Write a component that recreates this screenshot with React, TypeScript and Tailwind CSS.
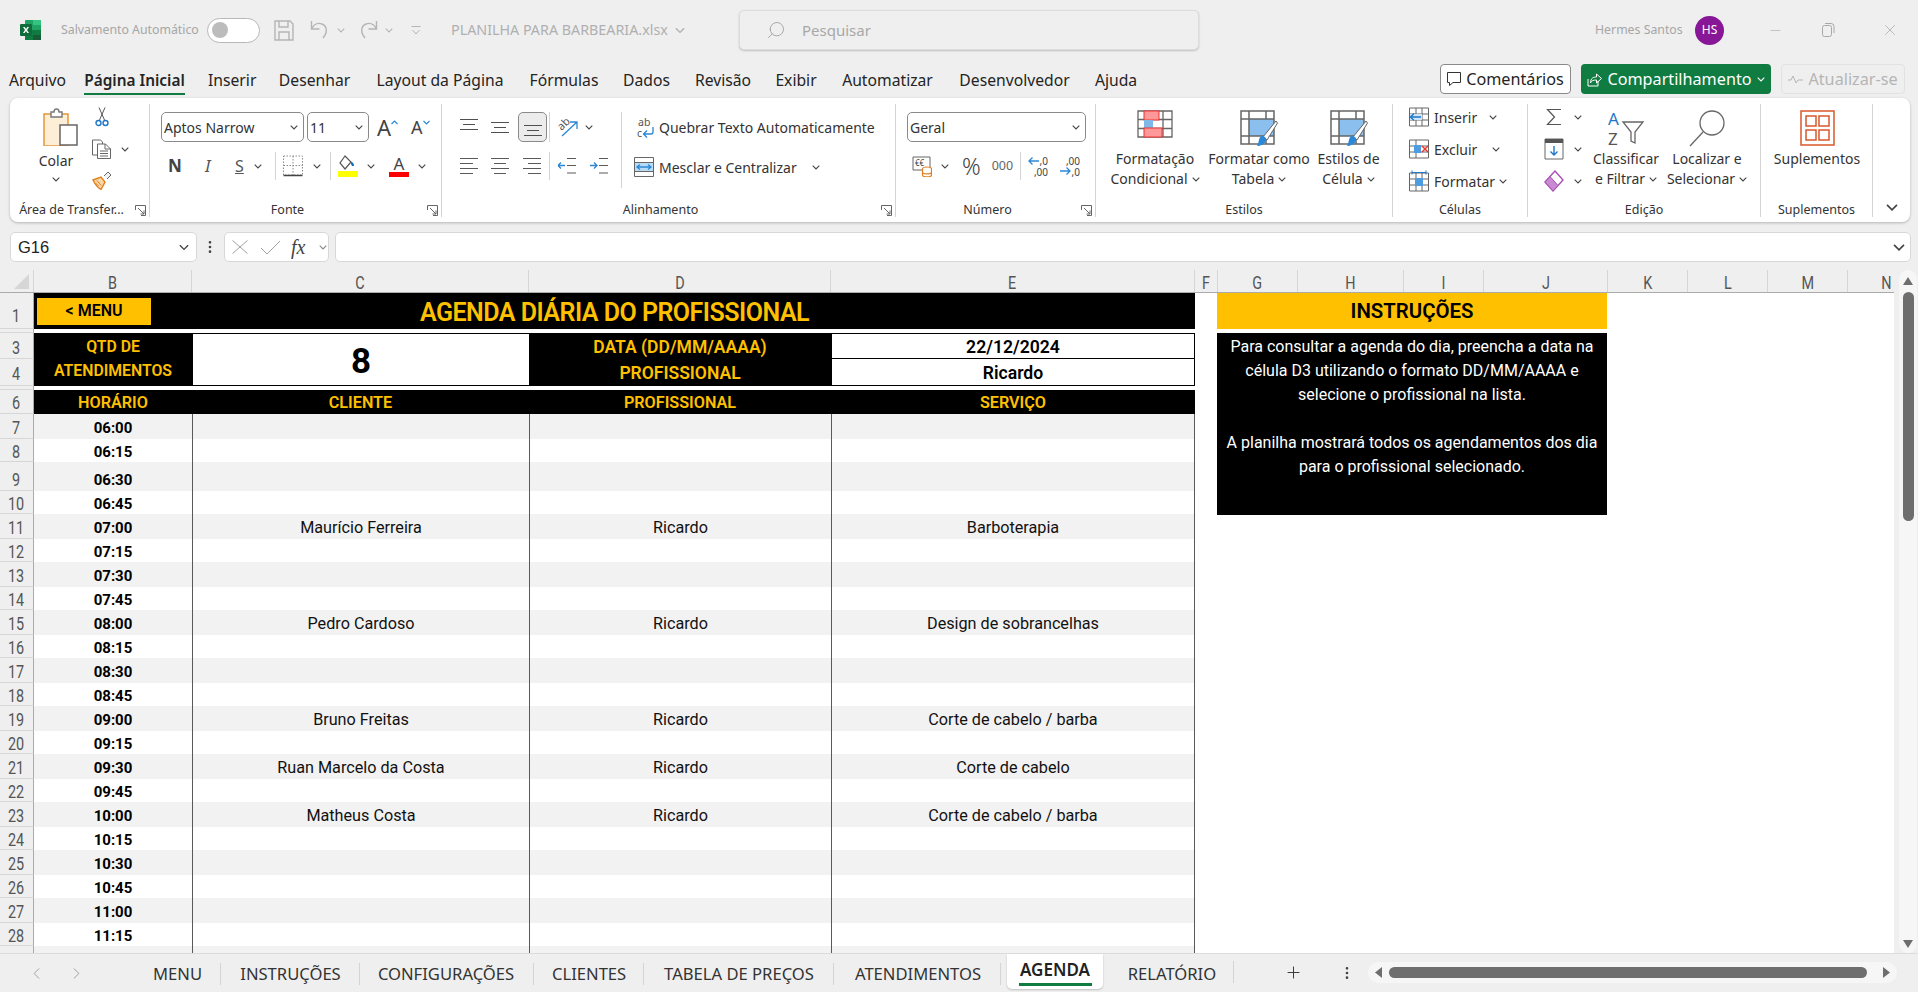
import { ReactNode } from "react";
import { ChevronLeft, ChevronRight, EllipsisVertical, Minus, Plus, Search, X } from "lucide-react";

const BLUE = "#2b88d8";

function Chev({ className = "", color = "#444" }: { className?: string; color?: string }) {
  return (
    <svg width="8" height="5" viewBox="0 0 8 5" className={`shrink-0 ${className}`}>
      <path d="M.7.7 4 4 7.3.7" fill="none" stroke={color} strokeWidth="1.1" />
    </svg>
  );
}

function Launcher() {
  return (
    <svg width="11" height="11" viewBox="0 0 11 11">
      <path d="M.5 5V.5H10.5V10.5H6M3 3l6 6M9 5.500V9H5.500" fill="none" stroke="#666" />
    </svg>
  );
}

function VSep({ className = "" }: { className?: string }) {
  return <div className={`w-px bg-[#d4d4d4] shrink-0 ${className}`} />;
}

// --- title bar icons
function ExcelLogo() {
  return (
    <svg width="21" height="20" viewBox="0 0 21 20" className="ml-[20px]">
      <rect x="5" y="0" width="16" height="20" rx="1" fill="#21a366" />
      <rect x="13" y="0" width="8" height="5" fill="#33c481" />
      <rect x="13" y="5" width="8" height="5" fill="#21a366" />
      <rect x="5" y="10" width="8" height="10" fill="#107c41" />
      <rect x="13" y="10" width="8" height="5" fill="#107c41" />
      <rect x="13" y="15" width="8" height="5" fill="#185c37" />
      <rect x="0" y="4" width="12" height="12" rx="1" fill="#0f6d3b" />
      <path d="M3 7h1.700L6 9l1.300-2H9L7 10l2 3H7.300L6 11l-1.300 2H3l2-3z" fill="#fff" />
    </svg>
  );
}

function SaveIcon() {
  return (
    <svg width="20" height="21" viewBox="0 0 20 21" className="ml-[14px]">
      <path d="M1 1h15l3 3v16H1zM5 1v6h9V1M5 20v-8h10v8" fill="none" stroke="#b5b5b5" strokeWidth="1.400" />
    </svg>
  );
}

function UndoIcon({ flip = false }: { flip?: boolean }) {
  return (
    <svg width="20" height="20" viewBox="0 0 20 20" className={flip ? "-scale-x-100" : ""}>
      <path d="M1.500 1v8h8M1.500 9C4 4 8 2.500 12 4c5 2 6 8 1 14" fill="none" stroke="#b5b5b5" strokeWidth="1.400" />
    </svg>
  );
}

function TitleBar() {
  return (
    <div className="h-[60px] flex items-center shrink-0">
      <ExcelLogo />
      <span className="ml-[20px] text-[12.300px] text-[#a6a6a6] w-[146px] whitespace-nowrap">Salvamento Automático</span>
      <div className="w-[53px] h-[25px] rounded-full border border-[#b8b8b8] bg-white flex items-center pl-[4px]">
        <div className="w-[16px] h-[16px] rounded-full bg-[#bcbcbc]" />
      </div>
      <SaveIcon />
      <div className="ml-[16px]"><UndoIcon /></div>
      <Chev className="ml-[7px]" color="#b5b5b5" />
      <div className="ml-[13px]"><UndoIcon flip /></div>
      <Chev className="ml-[7px]" color="#b5b5b5" />
      <svg width="10" height="9" viewBox="0 0 10 9" className="ml-[18px]">
        <path d="M.5.500h9M1.500 4 5 8l3.500-4" fill="none" stroke="#b5b5b5" />
      </svg>
      <span className="ml-[30px] text-[14.300px] text-[#b0b0b0] w-[219px] whitespace-nowrap">PLANILHA PARA BARBEARIA.xlsx</span>
      <Chev className="ml-[6px] scale-125" color="#b0b0b0" />
      <div className="ml-[55px] w-[460px] h-[40px] rounded-[5px] bg-[#efefef] border border-[#dcdcdc] shadow-[0_1px_2px_rgba(0,0,0,0.2)] flex items-center pl-[26px]">
        <Search size={20} strokeWidth={1.2} color="#a8a8a8" className="-scale-x-100" />
        <span className="ml-[16px] text-[15px] text-[#a8a8a8]">Pesquisar</span>
      </div>
      <span className="ml-[396px] w-[100px] text-[12.300px] text-[#a6a6a6] whitespace-nowrap">Hermes Santos</span>
      <div className="w-[29px] h-[29px] rounded-full bg-[#881798] text-white text-[12px] flex items-center justify-center">HS</div>
      <Minus size={15} strokeWidth={1} color="#a8a8a8" className="ml-[44px]" />
      <svg width="13" height="14" viewBox="0 0 13 14" className="ml-[39px]">
        <path d="M.5 4.500a2 2 0 0 1 2-2h5a2 2 0 0 1 2 2v7a2 2 0 0 1-2 2h-5a2 2 0 0 1-2-2zM3 .500h6a3 3 0 0 1 3 3V10" fill="none" stroke="#a8a8a8" />
      </svg>
      <X size={18} strokeWidth={1} color="#a8a8a8" className="ml-[46px]" />
    </div>
  );
}

const menuItems = [
  { t: "Arquivo", w: "w-[52px]" },
  { t: "Página Inicial", w: "w-[101px]", active: true },
  { t: "Inserir", w: "w-[47px]" },
  { t: "Desenhar", w: "w-[73px]" },
  { t: "Layout da Página", w: "w-[132px]" },
  { t: "Fórmulas", w: "w-[70px]" },
  { t: "Dados", w: "w-[49px]" },
  { t: "Revisão", w: "w-[58px]" },
  { t: "Exibir", w: "w-[42px]" },
  { t: "Automatizar", w: "w-[95px]" },
  { t: "Desenvolvedor", w: "w-[113px]" },
  { t: "Ajuda", w: "w-[44px]" },
];

function MenuBar() {
  return (
    <div className="h-[38px] flex items-start shrink-0 pl-[9px]">
      <div className="flex gap-[23px] text-[15.700px] text-[#242424] pt-[9px]">
        {menuItems.map((m) => (
          <div key={m.t} className={`${m.w} whitespace-nowrap text-center ${m.active ? "font-semibold text-[15.400px] relative" : ""}`}>
            {m.t}
            {m.active && <div className="absolute left-0 right-0 top-[24px] h-[2px] bg-[#107c41]" />}
          </div>
        ))}
      </div>
      <div className="ml-auto flex mt-[4px] mr-[13px] text-[16.200px] gap-[10px]">
        <div className="w-[131px] h-[30px] rounded-[4px] border border-[#8a8a8a] bg-white flex items-center justify-center gap-[5px] text-[#242424]">
          <svg width="14" height="14" viewBox="0 0 14 14"><path d="M.5.500h13v10H6l-3.500 3v-3h-2z" fill="none" stroke="#333" /></svg>
          Comentários
        </div>
        <div className="w-[190px] h-[30px] rounded-[4px] bg-[#107c41] text-white flex items-center justify-center gap-[5px]">
          <svg width="15" height="15" viewBox="0 0 15 15"><path d="M1 7v7h10V9M3.500 11c0-5 3-6 6-6V2l5 4.500-5 4.500V8c-3 0-5 .5-6 3z" fill="none" stroke="#fff" /></svg>
          Compartilhamento
          <Chev color="#fff" />
        </div>
        <div className="w-[124px] h-[30px] rounded-[4px] border border-[#e2e2e2] text-[#b5b5b5] flex items-center justify-center gap-[5px]">
          <svg width="15" height="9" viewBox="0 0 15 9"><path d="M0 5h3l2-4 3 7 2-3h5" fill="none" stroke="#b5b5b5" /></svg>
          Atualizar-se
        </div>
      </div>
    </div>
  );
}

// --- ribbon icons
function PasteIcon() {
  return (
    <svg width="35" height="38" viewBox="0 0 35 38" className="ml-[33px]">
      <path d="M1 6h24v32H1z" fill="#fdeed7" stroke="#e8963a" strokeWidth="1.500" />
      <path d="M8 4h3c0-4 5-4 5 0h3v5H8z" fill="#fff" stroke="#777" strokeWidth="1.400" />
      <path d="M17 17h17v20H17z" fill="#fff" stroke="#666" strokeWidth="1.500" />
    </svg>
  );
}
function Scissors() {
  return (
    <svg width="14" height="20" viewBox="0 0 14 20">
      <path d="M4 .500 9.500 13M10 .500 4.500 13" fill="none" stroke="#555" />
      <circle cx="3.500" cy="16" r="2.500" fill="none" stroke="#1f77c9" strokeWidth="1.400" />
      <circle cx="10.500" cy="16" r="2.500" fill="none" stroke="#1f77c9" strokeWidth="1.400" />
    </svg>
  );
}
function CopyIcon() {
  return (
    <svg width="20" height="20" viewBox="0 0 20 20">
      <path d="M5.500 16H.500V1h8l2 2v2" fill="none" stroke="#666" />
      <path d="M5.500 5h8l5 5v9.500h-13z M13 5v5h5.500 M8 12h8M8 14.500h8M8 17h8" fill="#fff" stroke="#666" />
    </svg>
  );
}
function BrushIcon() {
  return (
    <svg width="20" height="19" viewBox="0 0 20 19">
      <path d="M12 5l4-4 3 3-4 4" fill="#f2f2f2" stroke="#666" />
      <path d="M1 9l8-3 4 5-4 7.500C6 17 3 13 1 9z" fill="#fbd7a8" stroke="#e07f1d" strokeWidth="1.400" />
      <path d="M5 9.500l4 5M3.500 12l3 3" stroke="#e07f1d" />
    </svg>
  );
}
function AlignV({ pos }: { pos: "top" | "mid" | "bot" }) {
  const y = pos === "top" ? [2, 7, 12] : pos === "mid" ? [5, 10, 15] : [8, 13, 18];
  return (
    <svg width="20" height="20" viewBox="0 0 20 20">
      <path d={`M1 ${y[0]}.5h18M4 ${y[1]}.5h12M1 ${y[2]}.5h18`} stroke="#505050" strokeWidth="1.100" />
    </svg>
  );
}
function AlignH({ pos }: { pos: "l" | "c" | "r" }) {
  const d =
    pos === "l"
      ? "M1 3.500h18M1 8.500h13M1 13.500h18M1 18.500h13"
      : pos === "c"
        ? "M1 3.500h18M4 8.500h12M1 13.500h18M4 18.500h12"
        : "M1 3.500h18M6 8.500h13M1 13.500h18M6 18.500h13";
  return <svg width="20" height="22" viewBox="0 0 20 22"><path d={d} stroke="#5a5a5a" strokeWidth="1.100" /></svg>;
}
function Indent({ right = false }: { right?: boolean }) {
  return (
    <svg width="18" height="20" viewBox="0 0 18 20">
      <path d="M9 2.500h9M9 9.500h9M9 17h9" stroke="#5a5a5a" />
      <path d={right ? "M0 9.500h7M4 6.500l3 3-3 3" : "M7 9.500H0M3 6.500l-3 3 3 3"} fill="none" stroke={BLUE} strokeWidth="1.300" />
    </svg>
  );
}
function Orientation() {
  return (
    <svg width="21" height="22" viewBox="0 0 21 22" className="overflow-visible">
      <text x="0" y="12" fontSize="11" fill="#555" transform="rotate(-45 6 8)" fontFamily="Noto Sans">ab</text>
      <path d="M5 20 20 6M13 6h7v7" fill="none" stroke={BLUE} strokeWidth="1.300" />
    </svg>
  );
}
function WrapIcon() {
  return (
    <svg width="19" height="23" viewBox="0 0 19 23" className="overflow-visible">
      <text x="2" y="10" fontSize="10.500" fill="#555" fontFamily="Noto Sans">ab</text>
      <text x="1" y="21" fontSize="10.500" fill="#555" fontFamily="Noto Sans">c</text>
      <path d="M17 11v5a2 2 0 0 1-2 2H8M11 14.500 7.500 18l3.500 3.500" fill="none" stroke={BLUE} strokeWidth="1.300" />
    </svg>
  );
}
function MergeIcon() {
  return (
    <svg width="20" height="20" viewBox="0 0 20 20">
      <path d="M.5.500h19v19H.5zM.5 5.500h19M.5 14.500h19" fill="none" stroke="#666" />
      <rect x="1" y="6" width="18" height="8" fill="#b9dcf6" />
      <path d="M3 10h14M6 7.500 3 10l3 2.500M14 7.500l3 2.500-3 2.500" fill="none" stroke={BLUE} strokeWidth="1.300" />
    </svg>
  );
}
function BordersIcon() {
  return (
    <svg width="20" height="22" viewBox="0 0 20 22">
      <path d="M.5 1h19v19H.5zM10 1v19M.5 10.500h19" fill="none" stroke="#8a8a8a" strokeDasharray="1.500 1.500" />
      <path d="M.5 20.500h19" stroke="#444" strokeWidth="1.500" />
    </svg>
  );
}
function FillIcon() {
  return (
    <svg width="20" height="22" viewBox="0 0 20 22">
      <path d="M7 1 2 8l5 6 6-7z" fill="#fff" stroke="#555" strokeWidth="1.200" />
      <path d="M13 7c2 0 3 2 3 4h-2l-1-2z" fill="#0f6cbd" />
      <rect x="0" y="16" width="20" height="6" fill="#ffff00" />
    </svg>
  );
}
function FontColor() {
  return (
    <div className="flex flex-col items-center w-[20px]">
      <span className="text-[17px] leading-[17px] text-[#444]">A</span>
      <div className="w-[20px] h-[5px] bg-[#ff0000]" />
    </div>
  );
}
function GrowFont({ up }: { up: boolean }) {
  return (
    <div className="w-[20px] flex items-start">
      <span className={up ? "text-[22px] leading-[26px] text-[#444]" : "text-[18px] leading-[26px] text-[#444]"}>A</span>
      <svg width="7" height="5" viewBox="0 0 7 5" className="mt-[6px] shrink-0">
        <path d={up ? "M.5 4 3.500 1l3 3" : "M.5 1l3 3 3-3"} fill="none" stroke={BLUE} strokeWidth="1.200" />
      </svg>
    </div>
  );
}
function TableIcon() {
  return (
    <svg width="38" height="38" viewBox="0 0 38 38">
      <rect x="9" y="9" width="25" height="17" fill="#8bc0ee" />
      <path d="M1 1h33v33H1zM1 9h33M1 26h33M9 1v33M26 1v8M26 26v8" fill="none" stroke="#666" strokeWidth="1.500" />
      <path d="M36 11 23 27l4 3L37.500 13z" fill="#fff" stroke="#666" />
      <path d="M21 26c4 0 6 2 5 5-1 3-6 5-9 5 2-2 1-7 4-10z" fill={BLUE} />
    </svg>
  );
}
function CondFormatIcon() {
  return (
    <svg width="36" height="28" viewBox="0 0 36 28">
      <path d="M1 1h34v26H1zM1 9.500h34M1 18.500h34M8 1v26M26 1v26" fill="none" stroke="#666" strokeWidth="1.300" />
      <rect x="7" y="1" width="15" height="9" fill="#f99" stroke="#e33" />
      <rect x="7" y="10" width="9" height="8" fill="#7fb7e6" />
      <rect x="7" y="18" width="18" height="9" fill="#f99" stroke="#e33" />
    </svg>
  );
}
function InsertCells() {
  return (
    <svg width="20" height="20" viewBox="0 0 20 20">
      <path d="M.5 1h19v18H.5zM.5 7h19M.5 13h19M7 1v18M13 1v18" fill="none" stroke="#666" />
      <rect x="1" y="7" width="12" height="6" fill="#cfe5f8" />
      <path d="M12 10H2M5 6.500 1.500 10 5 13.500" fill="none" stroke="#1f77c9" strokeWidth="1.400" />
    </svg>
  );
}
function DeleteCells() {
  return (
    <svg width="20" height="20" viewBox="0 0 20 20">
      <path d="M.5 1h19v18H.5zM.5 7h19M.5 13h19M7 1v18" fill="none" stroke="#666" />
      <rect x="5" y="6" width="7" height="8" fill="#4d9de0" />
      <path d="M13 7l6 6M19 7l-6 6" stroke="#e83b2f" strokeWidth="1.500" />
    </svg>
  );
}
function FormatCells() {
  return (
    <svg width="20" height="22" viewBox="0 0 20 22">
      <path d="M.5 3h19v18H.5zM.5 9h19M.5 15h19M7 3v18M13 3v18" fill="none" stroke="#666" />
      <rect x="6" y="8" width="8" height="8" fill="#4d9de0" />
      <path d="M3 2.500h14M3 .500v4M17 .500v4" stroke="#1f77c9" />
    </svg>
  );
}
function SigmaIcon() {
  return (
    <svg width="16" height="18" viewBox="0 0 16 18">
      <path d="M15 1.500H1.500L8.500 9l-7 7.500H15" fill="none" stroke="#555" strokeWidth="1.200" />
    </svg>
  );
}
function FillDown() {
  return (
    <svg width="20" height="22" viewBox="0 0 20 22">
      <path d="M1 1h18v20H1z" fill="#fff" stroke="#666" />
      <rect x="1" y="1" width="18" height="4" fill="#555" />
      <path d="M10 8v9M6.500 13.500 10 17l3.500-3.500" fill="none" stroke="#1f77c9" strokeWidth="1.400" />
    </svg>
  );
}
function Eraser() {
  return (
    <svg width="20" height="22" viewBox="0 0 20 22">
      <path d="M11 1 19 10 9 21 1 12z" fill="#fff" stroke="#a94fb5" strokeWidth="1.400" />
      <path d="M6 6.500 14 15.500 9 21 1 12z" fill="#c88ad0" stroke="#a94fb5" />
    </svg>
  );
}
function SortIcon() {
  return (
    <svg width="38" height="36" viewBox="0 0 38 36" className="overflow-visible">
      <text x="1" y="15" fontSize="17" fill="#1f77c9" fontFamily="Noto Sans">A</text>
      <text x="1" y="35" fontSize="17" fill="#555" fontFamily="Noto Sans">Z</text>
      <path d="M16 12h20l-8 10v11l-4-2v-9z" fill="#fff" stroke="#666" strokeWidth="1.300" />
    </svg>
  );
}
function FindIcon() {
  return (
    <svg width="36" height="37" viewBox="0 0 36 37">
      <circle cx="23" cy="13" r="12" fill="#fff" stroke="#666" strokeWidth="1.300" />
      <path d="M14 22 1 36" stroke="#666" strokeWidth="1.300" />
    </svg>
  );
}
function AddinsIcon() {
  return (
    <svg width="35" height="36" viewBox="0 0 35 36">
      <path d="M1 1h33v34H1zM6 6h10v10H6zM19 6h10v10H19zM6 20h10v10H6zM19 20h10v10H19z" fill="none" stroke="#d9572b" strokeWidth="1.500" />
    </svg>
  );
}
function DecimalIcon({ more }: { more: boolean }) {
  return (
    <svg width="20" height="22" viewBox="0 0 20 22" className="overflow-visible">
      <text x="20" y="10" textAnchor="end" fontSize="10" fill="#444" fontFamily="Noto Sans">{more ? ",00" : ",0"}</text>
      <text x="20" y="21" textAnchor="end" fontSize="10" fill="#444" fontFamily="Noto Sans">{more ? ",0" : ",00"}</text>
      <path
        d={more ? "M0 16h10M6.500 12.500 10 16l-3.500 3.500" : "M11 6H1M4.500 2.500 1 6l3.500 3.500"}
        fill="none"
        stroke={BLUE}
        strokeWidth="1.300"
      />
    </svg>
  );
}

function SelectBox({ text, className }: { text: string; className: string }) {
  return (
    <div className={`h-[30px] rounded-[5px] border border-[#8a8a8a] bg-white flex items-center justify-between pl-[2px] pr-[5px] text-[14px] text-[#333] ${className}`}>
      {text}
      <Chev />
    </div>
  );
}

function Group({ label, width, launcher, children }: { label: string; width: string; launcher?: boolean; children: ReactNode }) {
  return (
    <div className={`${width} h-[113px] mt-[6px] border-r border-[#d4d4d4] flex flex-col shrink-0`}>
      <div className="flex-1 flex min-h-0">{children}</div>
      <div className="h-[14px] flex items-center text-[12.500px] leading-[14px] text-[#333]">
        <span className="flex-1 text-center whitespace-nowrap">{label}</span>
        {launcher && <span className="w-[16px] flex justify-end pr-[3px]"><Launcher /></span>}
      </div>
    </div>
  );
}

function BigButton({ width, icon, lines }: { width: string; icon: ReactNode; lines: string[] }) {
  return (
    <div className={`${width} flex flex-col items-center shrink-0`}>
      <div className="h-[45px] pt-[6px] flex justify-center">{icon}</div>
      {lines.map((l, i) => (
        <div key={l} className="h-[20px] leading-[20px] text-[14px] text-[#333] whitespace-nowrap flex items-center gap-[4px]">
          {l}
          {i === 1 && <Chev />}
        </div>
      ))}
    </div>
  );
}

function CellRow({ icon, text, w }: { icon: ReactNode; text: string; w: string }) {
  return (
    <div className="h-[28px] flex items-center pl-[16px] mb-[4px]">
      <div className="w-[20px] flex justify-center">{icon}</div>
      <span className={`ml-[5px] text-[14px] text-[#333] ${w}`}>{text}</span>
      <Chev />
    </div>
  );
}

function Ribbon() {
  return (
    <div className="mx-[10px] w-[1900px] h-[124px] rounded-[8px] bg-white shadow-[0_1px_3px_rgba(0,0,0,0.25)] flex shrink-0">
      <Group label="Área de Transfer..." width="w-[140px]" launcher>
        <div className="w-[78px] flex flex-col items-start">
          <div className="mt-[4px]"><PasteIcon /></div>
          <div className="w-[92px] text-center text-[14px] text-[#333] mt-[4px]">Colar</div>
          <div className="w-[92px] flex justify-center mt-[6px]"><Chev /></div>
        </div>
        <div className="flex flex-col items-start mt-[3px] pl-[4px]">
          <div className="h-[20px] pl-[3px]"><Scissors /></div>
          <div className="h-[20px] mt-[12px] flex items-center gap-[9px]"><CopyIcon /><Chev /></div>
          <div className="h-[19px] mt-[12px]"><BrushIcon /></div>
        </div>
      </Group>

      <Group label="Fonte" width="w-[292px]" launcher>
        <div className="flex flex-col pl-[11px] pt-[8px]">
          <div className="flex items-center">
            <SelectBox text="Aptos Narrow" className="w-[143px]" />
            <SelectBox text="11" className="w-[62px] ml-[3px]" />
            <div className="ml-[8px]"><GrowFont up /></div>
            <div className="ml-[14px]"><GrowFont up={false} /></div>
          </div>
          <div className="flex items-center h-[28px] mt-[10px]">
            <span className="ml-[7px] w-[12px] text-[17px] font-bold text-[#444]">N</span>
            <span className="ml-[25px] w-[10px] text-[17px] italic text-[#555]">I</span>
            <span className="ml-[20px] w-[12px] text-[16px] underline text-[#555]">S</span>
            <Chev className="ml-[7px]" />
            <VSep className="h-[28px] ml-[13px]" />
            <div className="ml-[7px]"><BordersIcon /></div>
            <Chev className="ml-[10px]" />
            <VSep className="h-[28px] ml-[9px]" />
            <div className="ml-[7px]"><FillIcon /></div>
            <Chev className="ml-[9px]" />
            <div className="ml-[14px]"><FontColor /></div>
            <Chev className="ml-[9px]" />
          </div>
        </div>
      </Group>

      <Group label="Alinhamento" width="w-[454px]" launcher>
        <div className="w-[180px] h-[76px] mt-[8px] border-r border-[#d4d4d4] flex flex-col shrink-0">
          <div className="h-[30px] flex items-center pl-[17px]">
            <AlignV pos="top" />
            <div className="ml-[11px]"><AlignV pos="mid" /></div>
            <div className="ml-[8px] w-[29px] h-[30px] rounded-[5px] border border-[#8a8a8a] bg-[#ececec] flex items-center justify-center"><AlignV pos="bot" /></div>
            <VSep className="h-[30px] ml-[2px]" />
            <div className="ml-[7px]"><Orientation /></div>
            <Chev className="ml-[7px]" />
          </div>
          <div className="h-[28px] mt-[10px] flex items-center pl-[17px]">
            <AlignH pos="l" />
            <div className="ml-[11px]"><AlignH pos="c" /></div>
            <div className="ml-[12px]"><AlignH pos="r" /></div>
            <VSep className="h-[28px] ml-[7px]" />
            <div className="ml-[8px]"><Indent /></div>
            <div className="ml-[14px]"><Indent right /></div>
          </div>
        </div>
        <div className="flex flex-col pt-[8px]">
          <div className="h-[30px] flex items-center pl-[14px]">
            <WrapIcon />
            <span className="ml-[4px] text-[14px] text-[#333] whitespace-nowrap">Quebrar Texto Automaticamente</span>
          </div>
          <div className="h-[28px] mt-[11px] flex items-center pl-[12px]">
            <MergeIcon />
            <span className="ml-[5px] text-[14px] text-[#333] w-[153px] whitespace-nowrap">Mesclar e Centralizar</span>
            <Chev />
          </div>
        </div>
      </Group>

      <Group label="Número" width="w-[200px]" launcher>
        <div className="flex flex-col pl-[11px] pt-[8px]">
          <SelectBox text="Geral" className="w-[179px]" />
          <div className="h-[28px] mt-[10px] flex items-center pl-[5px]">
            <svg width="20" height="21" viewBox="0 0 20 21">
              <path d="M1 1h17v13H1z" fill="#fff" stroke="#666" />
              <text x="3" y="10" fontSize="8" fill="#444" fontFamily="Noto Sans">€€</text>
              <ellipse cx="15" cy="13" rx="4.500" ry="2" fill="#fff" stroke="#e07f1d" strokeWidth="1.200" />
              <path d="M10.500 13v6c0 2.500 9 2.500 9 0v-6M10.500 16c0 2.500 9 2.500 9 0" fill="#fff" stroke="#e07f1d" strokeWidth="1.200" />
            </svg>
            <Chev className="ml-[9px]" />
            <span className="ml-[13px] text-[23px] leading-none text-[#444] font-light">%</span>
            <span className="ml-[11px] w-[22px] text-[12.500px] text-[#666]">000</span>
            <VSep className="h-[28px] ml-[6px]" />
            <div className="ml-[7px]"><DecimalIcon more={false} /></div>
            <div className="ml-[12px]"><DecimalIcon more /></div>
          </div>
        </div>
      </Group>

      <Group label="Estilos" width="w-[297px]">
        <BigButton width="w-[118px]" icon={<CondFormatIcon />} lines={["Formatação", "Condicional"]} />
        <BigButton width="w-[90px]" icon={<TableIcon />} lines={["Formatar como", "Tabela"]} />
        <BigButton width="w-[89px]" icon={<TableIcon />} lines={["Estilos de", "Célula"]} />
      </Group>

      <Group label="Células" width="w-[135px]">
        <div className="flex flex-col -mt-[1px]">
          <CellRow icon={<InsertCells />} text="Inserir" w="w-[55px]" />
          <CellRow icon={<DeleteCells />} text="Excluir" w="w-[58px]" />
          <CellRow icon={<FormatCells />} text="Formatar" w="w-[65px]" />
        </div>
      </Group>

      <Group label="Edição" width="w-[233px]">
        <div className="w-[62px] flex flex-col shrink-0 -mt-[1px]">
          <CellRow icon={<SigmaIcon />} text="" w="w-[5px]" />
          <CellRow icon={<FillDown />} text="" w="w-[5px]" />
          <CellRow icon={<Eraser />} text="" w="w-[5px]" />
        </div>
        <BigButton width="w-[72px]" icon={<SortIcon />} lines={["Classificar", "e Filtrar"]} />
        <BigButton width="w-[90px]" icon={<FindIcon />} lines={["Localizar e", "Selecionar"]} />
      </Group>

      <Group label="Suplementos" width="w-[112px]">
        <BigButton width="w-[112px]" icon={<AddinsIcon />} lines={["Suplementos"]} />
      </Group>

      <div className="flex-1 flex items-end justify-center pb-[12px]">
        <Chev className="scale-150" />
      </div>
    </div>
  );
}

function FormulaBar() {
  return (
    <div className="h-[30px] mt-[10px] flex items-center pl-[10px] shrink-0">
      <div className="w-[187px] h-[30px] rounded-[5px] border border-[#d8d8d8] bg-white flex items-center justify-between pl-[7px] pr-[8px] text-[16.500px] text-[#222] font-['Liberation_Sans',sans-serif]">
        G16
        <Chev className="scale-125" />
      </div>
      <EllipsisVertical size={16} color="#444" className="ml-[5px]" />
      <div className="ml-[6px] w-[105px] h-[30px] rounded-[5px] border border-[#d8d8d8] bg-white flex items-center pl-[7px]">
        <svg width="16" height="14" viewBox="0 0 16 14"><path d="M.5.500l15 13M15.500.500l-15 13" stroke="#a0a0a0" /></svg>
        <svg width="21" height="15" viewBox="0 0 21 15" className="ml-[12px]"><path d="M1 8l6 6L20 1" fill="none" stroke="#a0a0a0" /></svg>
        <span className="ml-[10px] w-[18px] text-[20px] italic text-[#444] font-['Liberation_Serif',serif]">fx</span>
        <Chev className="ml-[10px]" color="#888" />
      </div>
      <div className="ml-[6px] w-[1576px] h-[30px] rounded-[5px] border border-[#d8d8d8] bg-white flex items-center justify-end pr-[7px]">
        <Chev className="scale-150" />
      </div>
    </div>
  );
}

const columns = [
  { l: "B", w: "w-[158px]" },
  { l: "C", w: "w-[337px]" },
  { l: "D", w: "w-[302px]" },
  { l: "E", w: "w-[364px]" },
  { l: "F", w: "w-[23px]" },
  { l: "G", w: "w-[80px]" },
  { l: "H", w: "w-[106px]" },
  { l: "I", w: "w-[80px]" },
  { l: "J", w: "w-[124px]" },
  { l: "K", w: "w-[80px]" },
  { l: "L", w: "w-[80px]" },
  { l: "M", w: "w-[80px]" },
];

const headerFont = "font-['Roboto',sans-serif] text-[18px] text-[#555]";

// números e letras de cabeçalho são bem estreitos na referência
function Narrow({ children }: { children: ReactNode }) {
  return <span className="inline-block scale-x-[0.8]">{children}</span>;
}

function ColumnHeaders() {
  return (
    <div className={`h-[23px] flex shrink-0 bg-[#efefef] border-b border-[#ababab] ${headerFont}`}>
      <div className="w-[34px] border-r border-[#d6d6d6] flex items-end justify-end pr-[4px] pb-[3px]">
        <svg width="15" height="15" viewBox="0 0 15 15"><path d="M15 0v15H0z" fill="#d6d6d6" /></svg>
      </div>
      {columns.map((c) => (
        <div key={c.l} className={`${c.w} pt-[2px] border-r border-[#d6d6d6] flex items-center justify-center`}><Narrow>{c.l}</Narrow></div>
      ))}
      <div className="flex-1 pt-[2px] pr-[1px] flex items-center justify-end"><Narrow>N</Narrow></div>
    </div>
  );
}

const timeRows = [
  { n: 7, t: "06:00", h: "h-[25px]" },
  { n: 8, t: "06:15", h: "h-[23px]" },
  { n: 9, t: "06:30", h: "h-[29px]" },
  { n: 10, t: "06:45", h: "h-[23px]" },
  { n: 11, t: "07:00", h: "h-[25px]", c: "Maurício Ferreira", p: "Ricardo", s: "Barboterapia" },
  { n: 12, t: "07:15", h: "h-[23px]" },
  { n: 13, t: "07:30", h: "h-[25px]" },
  { n: 14, t: "07:45", h: "h-[23px]" },
  { n: 15, t: "08:00", h: "h-[25px]", c: "Pedro Cardoso", p: "Ricardo", s: "Design de sobrancelhas" },
  { n: 16, t: "08:15", h: "h-[23px]" },
  { n: 17, t: "08:30", h: "h-[25px]" },
  { n: 18, t: "08:45", h: "h-[23px]" },
  { n: 19, t: "09:00", h: "h-[25px]", c: "Bruno Freitas", p: "Ricardo", s: "Corte de cabelo / barba" },
  { n: 20, t: "09:15", h: "h-[23px]" },
  { n: 21, t: "09:30", h: "h-[25px]", c: "Ruan Marcelo da Costa", p: "Ricardo", s: "Corte de cabelo" },
  { n: 22, t: "09:45", h: "h-[23px]" },
  { n: 23, t: "10:00", h: "h-[25px]", c: "Matheus Costa", p: "Ricardo", s: "Corte de cabelo / barba" },
  { n: 24, t: "10:15", h: "h-[23px]" },
  { n: 25, t: "10:30", h: "h-[25px]" },
  { n: 26, t: "10:45", h: "h-[23px]" },
  { n: 27, t: "11:00", h: "h-[25px]" },
  { n: 28, t: "11:15", h: "h-[23px]" },
];

function RowNum({ n, className = "pt-[2px]" }: { n?: number; className?: string }) {
  return (
    <div className={`w-[34px] shrink-0 bg-[#efefef] border-r border-[#ababab] border-b border-b-[#d6d6d6] flex items-center justify-center ${headerFont} ${className}`}>
      {n && <Narrow>{n}</Narrow>}
    </div>
  );
}

const gold = "text-[#ffc000] font-semibold";
const cell = "flex items-center justify-center pt-[4px] text-[16.200px] text-[#111]";
const lineBorder = "border-l border-[#5a5a5a]";

function Agenda() {
  return (
    <div className="w-[1195px] shrink-0 flex flex-col font-['Roboto',sans-serif]">
      {/* linha 1 */}
      <div className="flex h-[36px]">
        <RowNum n={1} className="pt-[9px]" />
        <div className="flex-1 bg-black flex items-center pl-[3px]">
          <div className="w-[114px] h-[27px] bg-[#ffc000] flex items-center justify-center text-[16px] font-semibold text-black">&lt; MENU</div>
          <div className={`flex-1 text-center mr-[117px] pt-[4px] text-[25px] tracking-[-0.5px] ${gold}`}>AGENDA DIÁRIA DO PROFISSIONAL</div>
        </div>
      </div>
      <div className="flex h-[4px]"><RowNum className="" /><div className="flex-1 bg-white" /></div>
      {/* linhas 3 e 4 */}
      <div className="flex h-[53px]">
        <div className="flex flex-col">
          <RowNum n={3} className="h-[26px] pt-[4px]" />
          <RowNum n={4} className="h-[27px] pt-[2px]" />
        </div>
        <div className={`w-[158px] bg-black flex flex-col items-center justify-center pb-[1px] text-[15.800px] leading-[24px] ${gold}`}>
          <div>QTD DE</div>
          <div>ATENDIMENTOS</div>
        </div>
        <div className="w-[337px] bg-white border border-black border-r-0 flex items-center justify-center pt-[5px] text-[35px] font-bold text-black">8</div>
        <div className={`w-[302px] bg-black flex flex-col items-center text-[17.500px] ${gold}`}>
          <div className="h-[26px] leading-[28px]">DATA (DD/MM/AAAA)</div>
          <div className="h-[27px] leading-[28px]">PROFISSIONAL</div>
        </div>
        <div className="w-[364px] border border-black flex flex-col bg-white text-[17.600px] font-semibold text-black">
          <div className="h-[25px] pt-[3px] border-b border-black flex items-center justify-center">22/12/2024</div>
          <div className="flex-1 pt-[1px] flex items-center justify-center">Ricardo</div>
        </div>
      </div>
      <div className="flex h-[4px]"><RowNum className="" /><div className="flex-1 bg-white" /></div>
      {/* linha 6 */}
      <div className="flex h-[24px]">
        <RowNum n={6} />
        <div className={`flex-1 bg-black flex items-center pt-[3px] text-[16.200px] ${gold}`}>
          <div className="w-[158px] text-center">HORÁRIO</div>
          <div className="w-[337px] text-center">CLIENTE</div>
          <div className="w-[302px] text-center">PROFISSIONAL</div>
          <div className="w-[364px] text-center">SERVIÇO</div>
        </div>
      </div>
      {timeRows.map((r) => (
        <div key={r.n} className={`flex shrink-0 ${r.h} ${r.n % 2 ? "bg-[#f2f2f2]" : "bg-white"}`}>
          <RowNum n={r.n} className={r.n === 9 ? "pt-[6px]" : "pt-[2px]"} />
          <div className={`w-[158px] flex items-center justify-center text-[15px] font-bold text-black ${r.n === 9 ? "pt-[8px]" : "pt-[4px]"}`}>{r.t}</div>
          <div className={`w-[337px] ${lineBorder} ${cell}`}>{r.c}</div>
          <div className={`w-[302px] ${lineBorder} ${cell}`}>{r.p}</div>
          <div className={`w-[364px] ${lineBorder} border-r border-r-[#5a5a5a] ${cell}`}>{r.s}</div>
        </div>
      ))}
      {/* linha 29, só o começo aparece */}
      <div className="flex shrink-0 h-[25px] bg-[#f2f2f2]">
        <RowNum />
        <div className="w-[158px]" />
        <div className={`w-[337px] ${lineBorder}`} />
        <div className={`w-[302px] ${lineBorder}`} />
        <div className={`w-[364px] ${lineBorder} border-r border-r-[#5a5a5a]`} />
      </div>
    </div>
  );
}

function Instructions() {
  return (
    <div className="ml-[22px] w-[390px] shrink-0 flex flex-col font-['Roboto',sans-serif]">
      <div className="h-[36px] pt-[1px] bg-[#ffc000] flex items-center justify-center text-[20.400px] font-semibold text-black">INSTRUÇÕES</div>
      <div className="mt-[4px] h-[182px] bg-black text-white text-center text-[16px] leading-[24px] pt-[2px]">
        Para consultar a agenda do dia, preencha a data na
        <br />
        célula D3 utilizando o formato DD/MM/AAAA e
        <br />
        selecione o profissional na lista.
        <br />
        <br />
        A planilha mostrará todos os agendamentos dos dia
        <br />
        para o profissional selecionado.
      </div>
    </div>
  );
}

function VScroll() {
  return (
    <div className="w-[24px] shrink-0 bg-[#efefef] flex pl-[5px]">
      <div className="w-[18px] rounded-full bg-[#f6f6f6] flex flex-col items-center justify-between pt-[7px] pb-[5px]">
        <div className="flex flex-col items-center gap-[7px]">
          <svg width="10" height="8" viewBox="0 0 10 8"><path d="M5 0l5 8H0z" fill="#6e6e6e" /></svg>
          <div className="w-[11px] h-[229px] rounded-full bg-[#6e6e6e]" />
        </div>
        <svg width="10" height="8" viewBox="0 0 10 8"><path d="M5 8 10 0H0z" fill="#6e6e6e" /></svg>
      </div>
    </div>
  );
}

function SheetTabs() {
  const before = [
    { t: "MENU", w: "w-[49px]", after: "w-[19px]" },
    { t: "INSTRUÇÕES", w: "w-[101px]", after: "w-[17px]" },
    { t: "CONFIGURAÇÕES", w: "w-[138px]", after: "w-[18px]" },
    { t: "CLIENTES", w: "w-[73px]", after: "w-[19px]" },
    { t: "TABELA DE PREÇOS", w: "w-[152px]", after: "w-[20px]" },
    { t: "ATENDIMENTOS", w: "w-[128px]", after: "w-[6px]" },
  ];
  return (
    <div className="h-[39px] shrink-0 bg-[#efefef] border-t border-[#dcdcdc] flex items-start text-[16.600px] text-[#333]">
      <ChevronLeft size={19} strokeWidth={1} color="#8a8a8a" className="ml-[27px] mt-[10px]" />
      <ChevronRight size={19} strokeWidth={1} color="#8a8a8a" className="ml-[21px] mt-[10px]" />
      <div className="ml-[67px] flex items-center h-[36px] mt-[2px]">
        {before.map((b) => (
          <div key={b.t} className="flex items-center">
            <span className={`${b.w} whitespace-nowrap text-center`}>{b.t}</span>
            <div className="ml-[18px] w-px h-[22px] bg-[#d4d4d4]" />
            <div className={b.after} />
          </div>
        ))}
      </div>
      <div className="w-[96px] h-[35px] bg-white rounded-b-[5px] shadow-[0_1px_2px_rgba(0,0,0,0.2)] flex flex-col items-center">
        <div className="h-[29px] pt-[2px] flex items-center font-semibold text-[17px] text-[#222]">AGENDA</div>
        <div className="w-[73px] h-[3px] bg-[#107c41]" />
      </div>
      <span className="ml-[24px] mt-[8px] w-[90px] whitespace-nowrap text-center">RELATÓRIO</span>
      <div className="ml-[16px] mt-[7px] w-px h-[22px] bg-[#d4d4d4]" />
      <Plus size={19} strokeWidth={1.2} color="#333" className="ml-[50px] mt-[9px]" />
      <EllipsisVertical size={16} color="#444" className="ml-[36px] mt-[11px]" />
      <div className="ml-[13px] mt-[8px] w-[529px] h-[21px] rounded-full bg-[#f6f6f6] flex items-center pl-[7px] pr-[7px]">
        <svg width="7" height="11" viewBox="0 0 7 11"><path d="M0 5.500 7 0v11z" fill="#6e6e6e" /></svg>
        <div className="ml-[7px] w-[478px] h-[11px] rounded-full bg-[#6e6e6e]" />
        <svg width="7" height="11" viewBox="0 0 7 11" className="ml-auto"><path d="M7 5.500 0 0v11z" fill="#6e6e6e" /></svg>
      </div>
    </div>
  );
}

export default function App() {
  return (
    <div className="w-[1918px] h-[992px] overflow-hidden bg-[#efefef] flex flex-col font-['Noto_Sans',sans-serif]">
      <TitleBar />
      <MenuBar />
      <Ribbon />
      <FormulaBar />
      <div className="flex-1 min-h-0 flex mt-[8px]">
        <div className="w-[1894px] flex flex-col min-h-0">
          <ColumnHeaders />
          <div className="flex-1 min-h-0 bg-white flex items-start overflow-hidden">
            <Agenda />
            <Instructions />
          </div>
        </div>
        <VScroll />
      </div>
      <SheetTabs />
    </div>
  );
}
